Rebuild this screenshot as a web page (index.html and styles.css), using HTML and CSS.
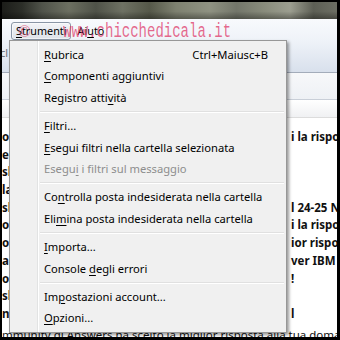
FILE: index.html
```html
<!DOCTYPE html>
<html lang="it">
<head>
<meta charset="utf-8">
<title>Strumenti</title>
<link rel="stylesheet" href="styles.css">
</head>
<body>
<div class="screen">
  <div class="titlebar"></div>
  <div class="menubar">
    <span class="mb-item active"><u>S</u>trumenti</span>
    <span class="mb-item">Ai<u>u</u>to</span>
  </div>
  <div class="toolbar"><span class="tb-glyph">cl</span></div>
  <div class="filterbar"></div>
  <div class="colheader"></div>
  <div class="list">
    <div class="row"><span class="cell-l">o</span><span class="cell-r">i la risposta</span></div>
    <div class="row"><span class="cell-l">er</span><span class="cell-r"></span></div>
    <div class="row"><span class="cell-l">sl</span><span class="cell-r"></span></div>
    <div class="row"><span class="cell-l">la</span><span class="cell-r"></span></div>
    <div class="row"><span class="cell-l">sl</span><span class="cell-r">l 24-25 Novembre</span></div>
    <div class="row"><span class="cell-l">o</span><span class="cell-r">i la risposta</span></div>
    <div class="row"><span class="cell-l">o</span><span class="cell-r">ior risposta</span></div>
    <div class="row"><span class="cell-l">a</span><span class="cell-r">ver IBM AIX</span></div>
    <div class="row"><span class="cell-l">o</span><span class="cell-r">!</span></div>
    <div class="row"><span class="cell-l">sl</span><span class="cell-r"></span></div>
    <div class="row"><span class="cell-l">n.</span><span class="cell-r">l</span></div>
    <div class="row row-last"><span class="full">mmunity di Answers ha scelto la miglior risposta alla tua domanda</span></div>
  </div>

  <div class="watermark"><span class="wm-c">©</span><span class="wm-t">www.chicchedicala.it</span></div>

  <div class="menu">
    <div class="item"><span><u>R</u>ubrica</span><span class="key">Ctrl+Maiusc+B</span></div>
    <div class="item"><span><u>C</u>omponenti aggiuntivi</span></div>
    <div class="item"><span>Registro atti<u>v</u>ità</span></div>
    <div class="sep"></div>
    <div class="item"><span><u>F</u>iltri...</span></div>
    <div class="item"><span><u>E</u>segui filtri nella cartella selezionata</span></div>
    <div class="item disabled"><span>Esegu<u>i</u> i filtri sul messaggio</span></div>
    <div class="sep"></div>
    <div class="item"><span>Co<u>n</u>trolla posta indesiderata nella cartella</span></div>
    <div class="item"><span>Eli<u>m</u>ina posta indesiderata nella cartella</span></div>
    <div class="sep"></div>
    <div class="item"><span><u>I</u>mporta...</span></div>
    <div class="item"><span>Console <u>d</u>egli errori</span></div>
    <div class="sep"></div>
    <div class="item"><span>Im<u>p</u>ostazioni account...</span></div>
    <div class="item"><span><u>O</u>pzioni...</span></div>
  </div>
</div>
</body>
</html>
```
FILE: styles.css
```css
html, body {
  margin: 0;
}
body {
  background: #000;
  width: 340px;
  height: 340px;
  overflow: hidden;
  padding: 2px 3px 3px 2px;
  box-sizing: border-box;
  font-family: "Noto Sans", "Open Sans", sans-serif;
}
.screen {
  position: relative;
  width: 335px;
  height: 335px;
  overflow: hidden;
  background: #fff;
  font-size: 11.2px;
  color: #000;
}
u {
  text-decoration-thickness: 1px;
  text-underline-offset: 2px;
}
.titlebar {
  height: 17px;
  background:
    linear-gradient(180deg, rgba(0,0,0,0) 55%, rgba(0,0,0,0.35) 100%),
    linear-gradient(90deg, #1c1d1a 0%, #2c2e28 6%, #50534a 12%, #6c6f61 20%, #4f5248 28%, #6e7163 36%, #555849 44%, #7e8170 52%, #8f9282 62%, #73766a 70%, #888b7b 78%, #9c9e90 86%, #5d5f55 93%, #6d6f64 100%);
}
.menubar {
  height: 23px;
  box-sizing: border-box;
  padding: 3px 0 0 9px;
  display: flex;
  align-items: flex-start;
  gap: 2px;
  background: linear-gradient(#f8fafd, #eef2f8);
  font-size: 10.8px;
}
.mb-item {
  height: 18px;
  box-sizing: border-box;
  padding: 0 3px 0 4px;
  line-height: 16px;
  border: 1px solid transparent;
  border-radius: 3px;
}
.mb-item.active {
  border-color: #8a96a6;
  background: linear-gradient(#f2f4f7, #dde2e9);
  box-shadow: inset 0 0 0 1px rgba(255,255,255,0.55);
}
.toolbar {
  height: 31px;
  box-sizing: border-box;
  border-bottom: 1px solid #a3acba;
  background: linear-gradient(#eef2f8, #d8e0ec);
  padding-top: 5px;
}
.tb-glyph {
  display: block;
  margin-left: -2px;
  color: #6a6f78;
  font-size: 11px;
  line-height: 12px;
}
.filterbar {
  height: 27px;
  box-sizing: border-box;
  border-bottom: 1px solid #c9cfd8;
  background: linear-gradient(#f7f8fa, #eef1f5);
}
.colheader {
  height: 18px;
  box-sizing: border-box;
  border-bottom: 1px solid #dcdcdc;
  background: linear-gradient(#ffffff, #f0f1f3);
}
.list {
  padding-top: 10px;
}
.row {
  height: 17.7px;
  display: flex;
  align-items: center;
  font-weight: 700;
  font-size: 11.5px;
  line-height: 17.7px;
  white-space: nowrap;
  color: #111;
}
.cell-l {
  width: 8px;
  overflow: hidden;
}
.cell-r {
  margin-left: auto;
  width: 48px;
  overflow: hidden;
  padding-left: 2px;
  box-sizing: border-box;
}
.row-last {
  padding-top: 3px;
}
.full {
  font-weight: 400;
  color: #111;
}
.watermark {
  position: absolute;
  left: 16px;
  top: 20px;
  display: flex;
  align-items: baseline;
  pointer-events: none;
  color: rgba(222, 48, 98, 0.72);
  white-space: nowrap;
}
.wm-c {
  font-family: "Liberation Serif", serif;
  font-size: 17px;
  line-height: 20px;
  width: 45px;
}
.wm-t {
  font-family: "Liberation Mono", monospace;
  font-size: 20px;
  line-height: 20px;
  display: inline-block;
  transform: scaleX(0.7);
  transform-origin: left center;
}
.menu {
  position: absolute;
  left: 7px;
  top: 38px;
  width: 278px;
  box-sizing: border-box;
  border: 1px solid #979797;
  padding: 3px 2px;
  background:
    linear-gradient(90deg, transparent 27px, #e2e3e3 27px, #e2e3e3 28px, #ffffff 28px, #ffffff 29px, transparent 29px),
    #f0f0f0;
  box-shadow: 2px 2px 3px rgba(0,0,0,0.4);
}
.item {
  height: 21.4px;
  line-height: 21.4px;
  padding: 0 16px 0 32px;
  display: flex;
  justify-content: space-between;
  white-space: nowrap;
  color: #000;
}
.item.disabled {
  color: #8d8d8d;
}
.sep {
  height: 7px;
  box-sizing: border-box;
  padding-top: 3px;
  margin-left: 28px;
}
.sep::before {
  content: "";
  display: block;
  height: 1px;
  background: #e0e0e0;
  border-bottom: 1px solid #ffffff;
}
```
